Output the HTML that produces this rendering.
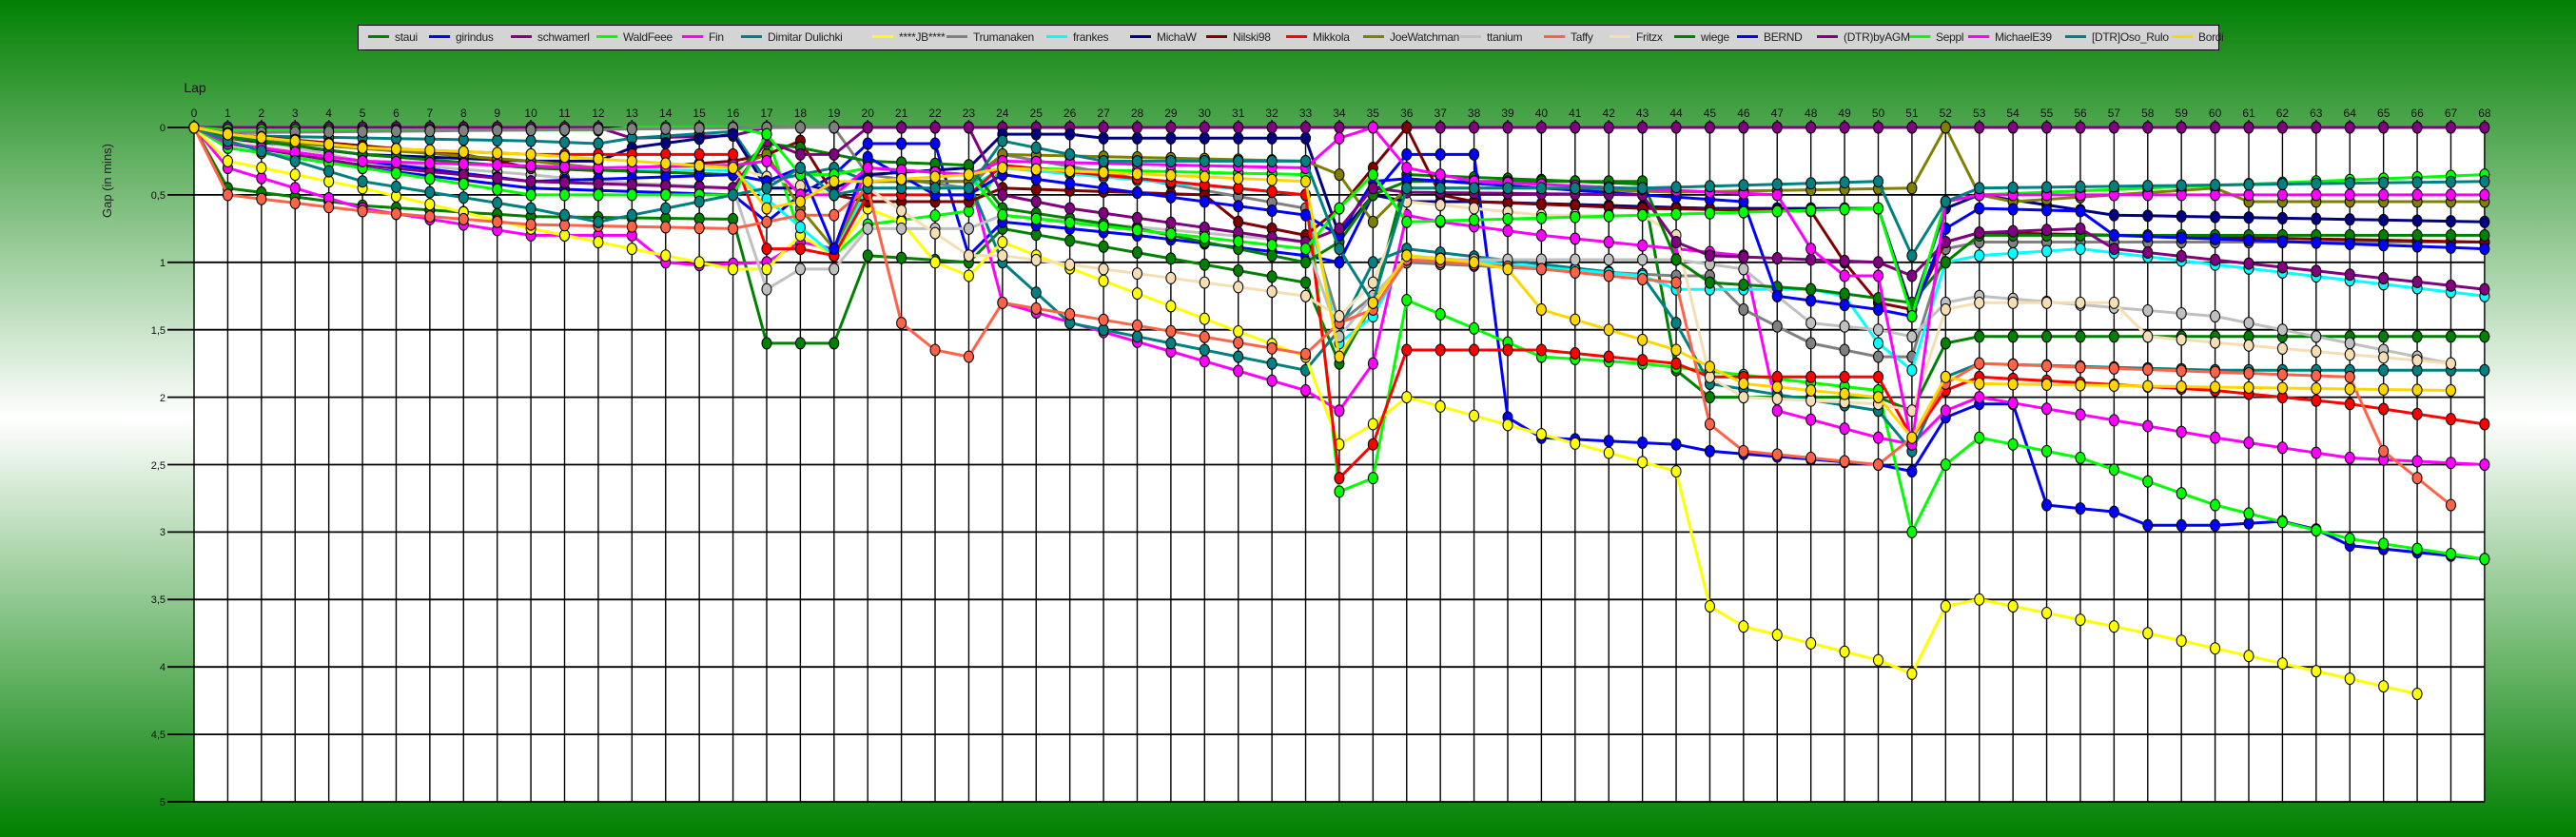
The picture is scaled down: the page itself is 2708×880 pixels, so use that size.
<!DOCTYPE html>
<html><head><meta charset="utf-8"><style>
html,body{margin:0;padding:0}
body{width:2708px;height:880px;overflow:hidden;background:linear-gradient(#028002 0%,#ffffff 50%,#008000 100%);font-family:"Liberation Sans",sans-serif;position:relative}
#legend{position:absolute;left:376px;top:26px;width:1955px;height:25px;background:#d4d4d4;border:1px solid #000}
.li{position:absolute;top:0;height:25px;line-height:25px;font-size:12px;letter-spacing:-0.3px;color:#222;white-space:nowrap}
.li i{display:inline-block;width:22px;height:3px;vertical-align:middle;margin-right:6px;margin-top:-2px}
svg{position:absolute;left:0;top:0}
</style></head><body>
<div id="legend">
<div class="li" style="left:10px"><i style="background:#008000"></i>staui</div>
<div class="li" style="left:74px"><i style="background:#0000ff"></i>girindus</div>
<div class="li" style="left:160px"><i style="background:#800080"></i>schwamerl</div>
<div class="li" style="left:250px"><i style="background:#00ff00"></i>WaldFeee</div>
<div class="li" style="left:340px"><i style="background:#ff00ff"></i>Fin</div>
<div class="li" style="left:402px"><i style="background:#008080"></i>Dimitar Dulichki</div>
<div class="li" style="left:540px"><i style="background:#ffff00"></i>****JB****</div>
<div class="li" style="left:618px"><i style="background:#808080"></i>Trumanaken</div>
<div class="li" style="left:723px"><i style="background:#00ffff"></i>frankes</div>
<div class="li" style="left:811px"><i style="background:#000080"></i>MichaW</div>
<div class="li" style="left:891px"><i style="background:#800000"></i>Nilski98</div>
<div class="li" style="left:975px"><i style="background:#ff0000"></i>Mikkola</div>
<div class="li" style="left:1056px"><i style="background:#808000"></i>JoeWatchman</div>
<div class="li" style="left:1158px"><i style="background:#c0c0c0"></i>ttanium</div>
<div class="li" style="left:1246px"><i style="background:#ff6347"></i>Taffy</div>
<div class="li" style="left:1315px"><i style="background:#f5deb3"></i>Fritzx</div>
<div class="li" style="left:1383px"><i style="background:#008000"></i>wiege</div>
<div class="li" style="left:1449px"><i style="background:#0000ff"></i>BERND</div>
<div class="li" style="left:1533px"><i style="background:#800080"></i>(DTR)byAGM</div>
<div class="li" style="left:1630px"><i style="background:#00ff00"></i>Seppl</div>
<div class="li" style="left:1692px"><i style="background:#ff00ff"></i>MichaelE39</div>
<div class="li" style="left:1794px"><i style="background:#008080"></i>[DTR]Oso_Rulo</div>
<div class="li" style="left:1906px"><i style="background:#ffd700"></i>Bordi</div>
</div>
<svg id="chart" width="2708" height="880" xmlns="http://www.w3.org/2000/svg" font-family="Liberation Sans, sans-serif">
<rect x="204" y="134" width="2408" height="709" fill="#fff"/>
<g id="grid" stroke="#000" fill="none"></g>
<text x="205" y="97" font-size="14" fill="#111" text-anchor="middle">Lap</text>
<text transform="translate(117,190) rotate(-90)" font-size="13" fill="#222" text-anchor="middle">Gap (in mins)</text>
<g font-size="11" fill="#111" text-anchor="end">
<text x="174" y="138">0</text><text x="174" y="209">0,5</text><text x="174" y="280">1</text><text x="174" y="351">1,5</text><text x="174" y="422">2</text><text x="174" y="493">2,5</text><text x="174" y="563">3</text><text x="174" y="634">3,5</text><text x="174" y="705">4</text><text x="174" y="776">4,5</text><text x="174" y="847">5</text>
</g>
<g font-size="12" fill="#111" text-anchor="middle">
<text x="204" y="123">0</text><text x="239.4" y="123">1</text><text x="274.8" y="123">2</text><text x="310.2" y="123">3</text><text x="345.6" y="123">4</text><text x="381.1" y="123">5</text><text x="416.5" y="123">6</text><text x="451.9" y="123">7</text><text x="487.3" y="123">8</text><text x="522.7" y="123">9</text><text x="558.1" y="123">10</text><text x="593.5" y="123">11</text><text x="628.9" y="123">12</text><text x="664.3" y="123">13</text><text x="699.7" y="123">14</text><text x="735.1" y="123">15</text><text x="770.6" y="123">16</text><text x="806" y="123">17</text><text x="841.4" y="123">18</text><text x="876.8" y="123">19</text><text x="912.2" y="123">20</text><text x="947.6" y="123">21</text><text x="983" y="123">22</text><text x="1018.4" y="123">23</text><text x="1053.8" y="123">24</text><text x="1089.2" y="123">25</text><text x="1124.6" y="123">26</text><text x="1160.1" y="123">27</text><text x="1195.5" y="123">28</text><text x="1230.9" y="123">29</text><text x="1266.3" y="123">30</text><text x="1301.7" y="123">31</text><text x="1337.1" y="123">32</text><text x="1372.5" y="123">33</text><text x="1407.9" y="123">34</text><text x="1443.3" y="123">35</text><text x="1478.8" y="123">36</text><text x="1514.2" y="123">37</text><text x="1549.6" y="123">38</text><text x="1585" y="123">39</text><text x="1620.4" y="123">40</text><text x="1655.8" y="123">41</text><text x="1691.2" y="123">42</text><text x="1726.6" y="123">43</text><text x="1762" y="123">44</text><text x="1797.4" y="123">45</text><text x="1832.9" y="123">46</text><text x="1868.3" y="123">47</text><text x="1903.7" y="123">48</text><text x="1939.1" y="123">49</text><text x="1974.5" y="123">50</text><text x="2009.9" y="123">51</text><text x="2045.3" y="123">52</text><text x="2080.7" y="123">53</text><text x="2116.1" y="123">54</text><text x="2151.6" y="123">55</text><text x="2187" y="123">56</text><text x="2222.4" y="123">57</text><text x="2257.8" y="123">58</text><text x="2293.2" y="123">59</text><text x="2328.6" y="123">60</text><text x="2364" y="123">61</text><text x="2399.4" y="123">62</text><text x="2434.8" y="123">63</text><text x="2470.2" y="123">64</text><text x="2505.7" y="123">65</text><text x="2541.1" y="123">66</text><text x="2576.5" y="123">67</text><text x="2611.9" y="123">68</text>
</g>
<g id="series"></g>
</svg>
<script>
(function(){
var NS="http://www.w3.org/2000/svg";
var X0=204,DX=35.41,Y0=134,DY=141.8;
var grid=document.getElementById('grid');
function el(t,a,p){var e=document.createElementNS(NS,t);for(var k in a)e.setAttribute(k,a[k]);p.appendChild(e);return e;}
for(var i=0;i<=68;i++){var x=X0+DX*i;el('line',{x1:x,y1:126,x2:x,y2:843,'stroke-width':1.4},grid);}
for(var k=0;k<=10;k++){var y=Y0+k*70.9;el('line',{x1:176,y1:y,x2:2612,y2:y,'stroke-width':1.8},grid);}
var S=[
["#008000",{0:0,1:.45,5:.58,10:.66,16:.68,17:1.6,19:1.6,20:.95,23:1,24:.75,33:1.15,34:1.75,35:1.3,36:.35,43:.42,44:1.8,45:2,50:2,51:2.1,52:1.6,53:1.55,68:1.55}],
["#0000ff",{0:0,1:.15,5:.3,10:.45,16:.5,17:.7,18:.5,19:.35,20:.12,22:.12,23:.95,24:.7,28:.8,33:.95,34:1,35:.5,36:.2,38:.2,39:2.15,40:2.3,44:2.35,45:2.4,50:2.5,51:2.55,52:2.15,53:2.05,54:2.05,55:2.8,57:2.85,58:2.95,60:2.95,62:2.92,63:2.98,64:3.1,68:3.2}],
["#800080",{0:0,12:0,13:.08,16:.06,17:0,68:0}],
["#00ff00",{0:0,1:.02,12:.02,13:0,16:0,17:.05,18:.8,19:.95,20:.72,23:.62,24:.3,33:.35,34:2.7,35:2.6,36:1.28,40:1.7,43:1.75,50:1.95,51:3,52:2.5,53:2.3,56:2.45,60:2.8,64:3.05,68:3.2}],
["#ff00ff",{0:0,1:.3,5:.6,10:.8,13:.8,14:1,15:1.02,17:1,18:.85,19:.9,20:.3,23:.35,24:1.3,33:1.95,34:2.1,35:1.75,36:.65,37:.7,40:.8,44:.9,46:.95,47:2.1,50:2.3,51:2.35,52:2.1,53:2,60:2.3,64:2.45,68:2.5}],
["#008080",{0:0,1:.06,10:.1,12:.12,13:.08,16:.03,17:.4,19:.3,20:.4,23:.4,24:1,26:1.45,33:1.8,34:1.5,35:1,36:.9,43:1.1,44:1.45,45:1.9,50:2.1,51:2.4,52:1.85,53:1.75,60:1.8,68:1.8}],
["#ffff00",{0:0,1:.25,5:.45,10:.75,12:.85,16:1.05,17:1.05,18:.8,19:.95,20:.6,21:.7,22:1,23:1.1,24:.85,25:.95,33:1.7,34:2.35,35:2.2,36:2,44:2.55,45:3.55,46:3.7,50:3.95,51:4.05,52:3.55,53:3.5,58:3.75,66:4.2}],
["#808080",{0:0,1:.04,18:0,19:0,20:.35,23:.45,24:.2,33:.6,34:1.45,35:1.25,36:1,44:1.1,45:1.1,46:1.35,48:1.6,50:1.7,51:1.7,52:.9,53:.85,68:.85}],
["#00ffff",{0:0,1:.1,5:.25,12:.3,16:.32,19:.95,20:.45,23:.45,24:.3,33:.5,34:1.6,35:1.4,36:.95,43:1.1,44:1.2,48:1.2,49:1.25,50:1.6,51:1.8,52:1,53:.95,56:.9,68:1.25}],
["#000080",{0:0,1:.08,5:.2,10:.25,12:.25,13:.15,16:.05,17:.45,19:.45,20:.35,23:.3,24:.05,26:.05,27:.08,33:.08,34:.8,35:.5,36:.55,38:.55,45:.6,50:.6,51:1.35,52:.6,53:.5,57:.65,68:.7}],
["#800000",{0:0,1:.05,8:.2,10:.3,12:.32,16:.25,17:.2,18:.1,19:.5,20:.55,23:.55,24:.45,30:.5,31:.7,33:.8,34:.6,35:.3,36:0,37:.5,38:.55,43:.6,48:.62,49:1,50:1.3,51:1.35,52:.85,53:.78,68:.85}],
["#ff0000",{0:0,1:.05,5:.15,10:.2,16:.2,17:.9,18:.9,19:.95,20:.5,23:.5,24:.28,33:.5,34:2.6,35:2.35,36:1.65,40:1.65,44:1.75,45:1.85,50:1.85,51:2.3,52:1.95,53:1.85,60:1.95,64:2.05,68:2.2}],
["#808000",{0:0,1:.08,10:.25,12:.3,16:.3,17:.2,18:.6,19:.9,20:.4,23:.4,24:.2,33:.25,34:.35,35:.7,36:.45,40:.45,44:.48,51:.45,52:0,53:.5,54:.55,60:.45,61:.55,68:.55}],
["#c0c0c0",{0:0,1:.05,5:.25,10:.35,12:.4,16:.45,17:1.2,18:1.05,19:1.05,20:.75,23:.75,24:.65,33:.85,34:1.55,35:1.25,36:.98,44:.98,46:1.05,48:1.45,50:1.5,51:1.55,52:1.3,53:1.25,60:1.4,67:1.75}],
["#ff6347",{0:0,1:.5,5:.62,10:.72,16:.75,17:.7,18:.65,19:.65,20:.45,21:1.45,22:1.65,23:1.7,24:1.3,33:1.68,34:1.45,35:1.35,36:.98,40:1.05,44:1.15,45:2.2,46:2.4,50:2.5,51:2.3,52:1.9,53:1.75,64:1.85,65:2.4,67:2.8}],
["#f5deb3",{0:0,1:.1,5:.25,12:.3,16:.3,19:.5,20:.45,23:.95,24:.95,33:1.25,34:1.4,35:1.15,36:.55,40:.65,43:.65,44:.8,45:1.85,46:2,50:2.05,51:2.1,52:1.35,53:1.3,57:1.3,58:1.55,67:1.75}],
["#008000",{0:0,1:.07,5:.2,10:.3,16:.35,17:.12,18:.15,19:.2,20:.25,23:.28,24:.6,28:.75,33:1,34:.85,35:.5,36:.4,43:.4,44:.98,45:1.15,48:1.2,51:1.3,52:1,53:.8,68:.8}],
["#0000ff",{0:0,1:.12,5:.25,10:.4,16:.35,17:.4,18:.3,19:.9,20:.22,22:.5,23:.5,24:.35,33:.65,34:.8,35:.4,36:.38,43:.5,46:.55,47:1.25,50:1.35,51:1.4,52:.75,53:.6,56:.62,57:.8,68:.9}],
["#800080",{0:0,1:.12,5:.28,10:.4,16:.45,17:.1,18:.2,19:.2,20:0,23:0,24:.5,26:.6,33:.85,34:.75,35:.45,36:.48,43:.5,44:.85,45:.95,50:1,51:1.1,52:.85,53:.78,56:.75,57:.9,68:1.2}],
["#00ff00",{0:0,1:.15,5:.3,10:.5,16:.5,17:.05,18:.35,19:.35,20:.3,23:.35,24:.65,33:.9,34:.6,35:.35,36:.7,43:.65,50:.6,51:1.4,52:.55,53:.5,68:.35}],
["#ff00ff",{0:0,1:.12,5:.25,12:.3,16:.28,17:.25,18:.5,19:.5,20:.3,23:.35,24:.25,33:.3,34:.08,35:0,36:.3,38:.4,47:.5,48:.9,49:1.1,50:1.1,51:2.35,52:.55,53:.5,68:.5}],
["#008080",{0:0,1:.1,5:.4,10:.6,12:.7,16:.5,17:.45,18:.3,19:.5,20:.45,23:.45,24:.1,27:.25,33:.25,34:.9,35:1.3,36:.45,43:.45,50:.4,51:.95,52:.55,53:.45,68:.4}],
["#ffd700",{0:0,1:.05,5:.15,10:.2,16:.3,17:.6,18:.55,19:.4,20:.4,23:.35,24:.3,33:.4,34:1.7,35:1.3,36:.95,38:1,39:1.05,40:1.35,44:1.65,46:1.9,50:2,51:2.3,52:1.85,53:1.9,67:1.95}]
];
var g=document.getElementById('series');
S.forEach(function(s){
  var keys=Object.keys(s[1]).map(Number).sort(function(a,b){return a-b});
  var last=keys[keys.length-1],pts=[];
  for(var l=0;l<=last;l++){
    var v;
    for(var j=0;j<keys.length;j++){
      if(keys[j]===l){v=s[1][l];break;}
      if(keys[j]>l){var a=keys[j-1],b=keys[j];v=s[1][a]+(s[1][b]-s[1][a])*(l-a)/(b-a);break;}
    }
    pts.push([X0+DX*l,Y0+DY*v]);
  }
  el('polyline',{points:pts.map(function(p){return p[0].toFixed(1)+','+p[1].toFixed(1)}).join(' '),fill:'none',stroke:s[0],'stroke-width':3},g);
  pts.forEach(function(p){el('ellipse',{cx:p[0],cy:p[1],rx:5,ry:6,fill:s[0],stroke:'#000','stroke-width':1},g);});
});
})();
</script>
</body></html>
